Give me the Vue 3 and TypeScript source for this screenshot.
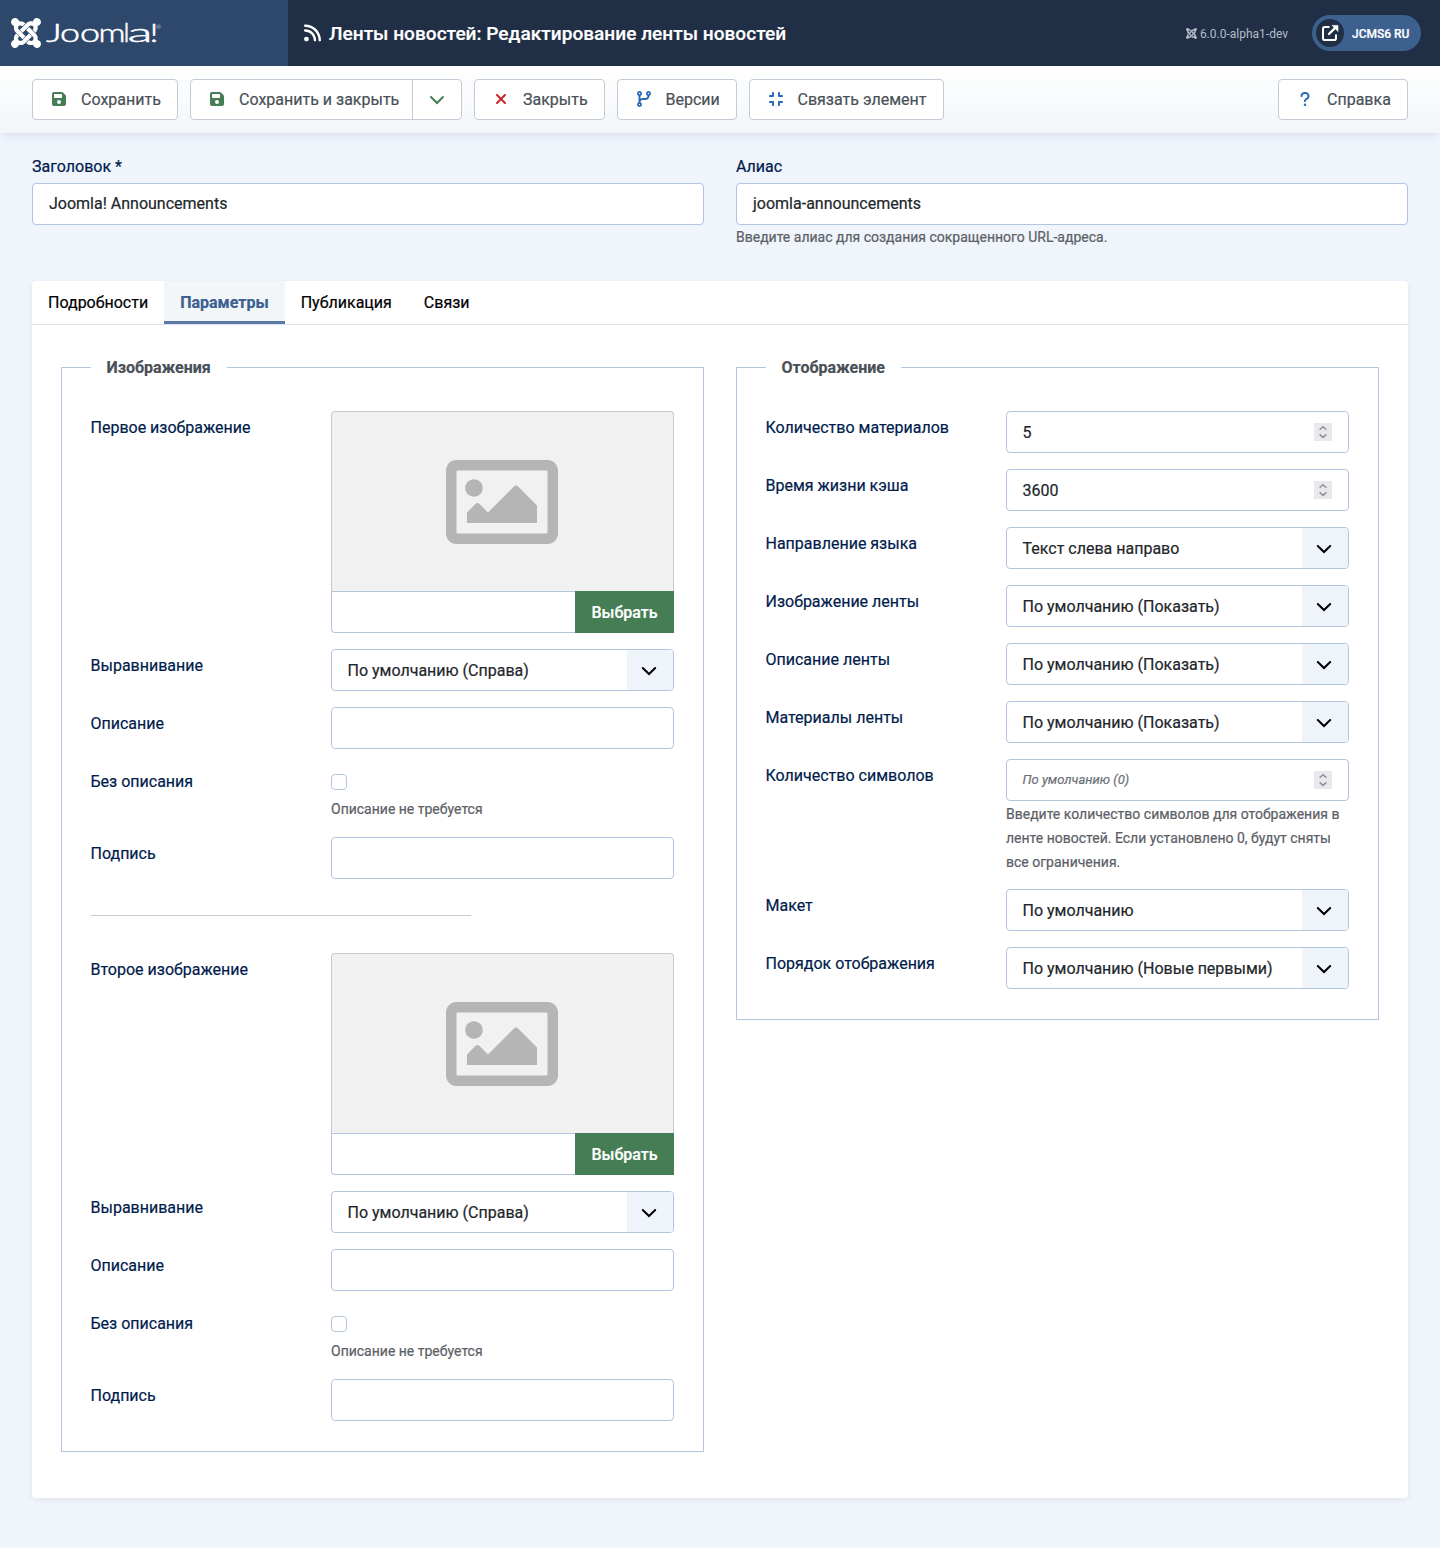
<script setup lang="ts">
interface Field {
  label: string
  type: 'number' | 'select' | 'text' | 'media' | 'check'
  value?: string
  placeholder?: string
  help?: string[]
}

interface ToolButton {
  key: string
  label: string
  icon: string
  box: string
  size: number
  split?: boolean
}

const joomlaMark =
  'M.6 92.1C.6 58.8 27.4 32 60.4 32c30 0 54.5 21.9 59.2 50.2 32.6-7.6 67.1.6 96.5 30l-44.3 44.3c-20.5-20.5-42.6-16.3-55.4-3.5-14.3 14.3-14.3 37.9 0 52.2l99.5 99.5-44 44.3c-87.7-87.2-49.7-49.7-99.8-99.7-26.8-26.5-35-64.8-24.8-98.9C20.4 144.6.6 120.7.6 92.1zm129.5 116.4l44.3 44.3c10-10 89.7-89.7 99.7-99.8 14.3-14.3 37.6-14.3 51.9 0 12.8 12.8 17 35-3.5 55.4l44 44.3c31.2-31.2 38.5-67.6 28.9-101.2 29.2-4.1 51.9-29.2 51.9-59.5 0-33.2-26.8-60.1-59.8-60.1-30.3 0-55.4 22.5-59.5 51.6-33.8-9.9-71.7-1.5-98.3 25.1-18.3 19.1-71.1 71.5-99.6 99.9zm266.3 152.2c8.2-32.7-.9-68.5-26.3-93.9-11.8-12.2 5 4.7-99.5-99.7l-44.3 44.3 99.7 99.7c14.3 14.3 14.3 37.6 0 51.9-12.8 12.8-35 17-55.4-3.5l-44 44.3c27.6 30.2 68 38.8 102.7 28 5.5 27.4 29.7 48.1 58.9 48.1 33 0 59.8-26.8 59.8-60.1 0-30.2-22.5-55-51.6-59.1zm-84.3-53.1l-44-44.3c-87 86.4-50.4 50.4-99.7 99.8-14.3 14.3-37.6 14.3-51.9 0-13.1-13.4-16.9-35.3 3.2-55.4l-44-44.3c-30.2 30.2-38 65.2-29.5 98.3-26.7 6-46.2 29.9-46.2 58.2C0 453.2 26.8 480 59.8 480c28.6 0 52.5-19.8 58.6-46.7 32.7 8.2 68.5-.6 94.2-26 32.1-32 12.2-12.4 99.5-99.7z'
const rss =
  'M0 64C0 46.3 14.3 32 32 32c229.8 0 416 186.2 416 416c0 17.7-14.3 32-32 32s-32-14.3-32-32C384 253.6 226.4 96 32 96C14.3 96 0 81.7 0 64zM0 416a64 64 0 1 1 128 0A64 64 0 1 1 0 416zM32 160c159.1 0 288 128.9 288 288c0 17.7-14.3 32-32 32s-32-14.3-32-32c0-123.7-100.3-224-224-224c-17.7 0-32-14.3-32-32s14.3-32 32-32z'
const floppy =
  'M64 32C28.7 32 0 60.7 0 96V416c0 35.3 28.7 64 64 64H384c35.3 0 64-28.7 64-64V173.3c0-17-6.7-33.3-18.7-45.3L352 50.7C340 38.7 323.7 32 306.7 32H64zm0 96c0-17.7 14.3-32 32-32H288c17.7 0 32 14.3 32 32v64c0 17.7-14.3 32-32 32H96c-17.7 0-32-14.3-32-32V128zM224 288a64 64 0 1 1 0 128 64 64 0 1 1 0-128z'
const xmark =
  'M342.6 150.6c12.5-12.5 12.5-32.8 0-45.3s-32.8-12.5-45.3 0L192 210.7 86.6 105.4c-12.5-12.5-32.8-12.5-45.3 0s-12.5 32.8 0 45.3L146.7 256 41.4 361.4c-12.5 12.5-12.5 32.8 0 45.3s32.8 12.5 45.3 0L192 301.3 297.4 406.6c12.5 12.5 32.8 12.5 45.3 0s12.5-32.8 0-45.3L237.3 256 342.6 150.6z'
const branch =
  'M80 104a24 24 0 1 0 0-48 24 24 0 1 0 0 48zm80-24c0 32.8-19.7 61-48 73.3v87.8c18.8-10.9 40.7-17.1 64-17.1h96c35.3 0 64-28.7 64-64v-6.7C307.7 141 288 112.8 288 80c0-44.2 35.8-80 80-80s80 35.8 80 80c0 32.8-19.7 61-48 73.3V160c0 70.7-57.3 128-128 128H176c-35.3 0-64 28.7-64 64v6.7c28.3 12.3 48 40.5 48 73.3c0 44.2-35.8 80-80 80s-80-35.8-80-80c0-32.8 19.7-61 48-73.3V352 153.3C19.7 141 0 112.8 0 80C0 35.8 35.8 0 80 0s80 35.8 80 80zm232 0a24 24 0 1 0 -48 0 24 24 0 1 0 48 0zM80 456a24 24 0 1 0 0-48 24 24 0 1 0 0 48z'
const compress =
  'M160 64c0-17.7-14.3-32-32-32s-32 14.3-32 32v64H32c-17.7 0-32 14.3-32 32s14.3 32 32 32h96c17.7 0 32-14.3 32-32V64zM32 320c-17.7 0-32 14.3-32 32s14.3 32 32 32H96v64c0 17.7 14.3 32 32 32s32-14.3 32-32V352c0-17.7-14.3-32-32-32H32zM352 64c0-17.7-14.3-32-32-32s-32 14.3-32 32v96c0 17.7 14.3 32 32 32h96c17.7 0 32-14.3 32-32s-14.3-32-32-32H352V64zM320 320c-17.7 0-32 14.3-32 32v96c0 17.7 14.3 32 32 32s32-14.3 32-32V384h64c17.7 0 32-14.3 32-32s-14.3-32-32-32H320z'
const question =
  'M80 160c0-35.3 28.7-64 64-64h32c35.3 0 64 28.7 64 64v3.6c0 21.8-11.1 42.1-29.4 53.8l-42.2 27.1c-25.2 16.2-40.4 44.1-40.4 74V320c0 17.7 14.3 32 32 32s32-14.3 32-32v-1.4c0-8.2 4.2-15.8 11-20.2l42.2-27.1c36.6-23.6 58.8-64.1 58.8-107.7V160c0-70.7-57.3-128-128-128H144C73.3 32 16 89.3 16 160c0 17.7 14.3 32 32 32s32-14.3 32-32zm80 320a40 40 0 1 0 0-80 40 40 0 1 0 0 80z'
const picture =
  'M464 64H48C21.49 64 0 85.49 0 112v288c0 26.51 21.49 48 48 48h416c26.51 0 48-21.49 48-48V112c0-26.51-21.49-48-48-48zm-6 336H54a6 6 0 0 1-6-6V118a6 6 0 0 1 6-6h404a6 6 0 0 1 6 6v276a6 6 0 0 1-6 6zM128 152c-22.091 0-40 17.909-40 40s17.909 40 40 40 40-17.909 40-40-17.909-40-40-40zM96 352h320v-80l-87.515-87.515c-4.686-4.686-12.284-4.686-16.971 0L192 304l-39.515-39.515c-4.686-4.686-12.284-4.686-16.971 0L96 304v48z'

const buttons: ToolButton[] = [
  { key: 'save', label: 'Сохранить', icon: floppy, box: '0 0 448 512', size: 14 },
  { key: 'save-close', label: 'Сохранить и закрыть', icon: floppy, box: '0 0 448 512', size: 14, split: true },
  { key: 'close', label: 'Закрыть', icon: xmark, box: '0 0 384 512', size: 12 },
  { key: 'versions', label: 'Версии', icon: branch, box: '0 0 448 512', size: 14 },
  { key: 'link', label: 'Связать элемент', icon: compress, box: '0 0 448 512', size: 14 },
]

const tabs = ['Подробности', 'Параметры', 'Публикация', 'Связи']
const activeTab = 'Параметры'

const imageFields = (first: string): Field[] => [
  { label: first, type: 'media' },
  { label: 'Выравнивание', type: 'select', value: 'По умолчанию (Справа)' },
  { label: 'Описание', type: 'text' },
  { label: 'Без описания', type: 'check', help: ['Описание не требуется'] },
  { label: 'Подпись', type: 'text' },
]

const groups: { title: string; key: string; blocks: Field[][] }[] = [
  {
    title: 'Изображения',
    key: 'images',
    blocks: [imageFields('Первое изображение'), imageFields('Второе изображение')],
  },
  {
    title: 'Отображение',
    key: 'display',
    blocks: [
      [
        { label: 'Количество материалов', type: 'number', value: '5' },
        { label: 'Время жизни кэша', type: 'number', value: '3600' },
        { label: 'Направление языка', type: 'select', value: 'Текст слева направо' },
        { label: 'Изображение ленты', type: 'select', value: 'По умолчанию (Показать)' },
        { label: 'Описание ленты', type: 'select', value: 'По умолчанию (Показать)' },
        { label: 'Материалы ленты', type: 'select', value: 'По умолчанию (Показать)' },
        {
          label: 'Количество символов',
          type: 'number',
          placeholder: 'По умолчанию (0)',
          help: [
            'Введите количество символов для отображения в',
            'ленте новостей. Если установлено 0, будут сняты',
            'все ограничения.',
          ],
        },
        { label: 'Макет', type: 'select', value: 'По умолчанию' },
        { label: 'Порядок отображения', type: 'select', value: 'По умолчанию (Новые первыми)' },
      ],
    ],
  },
]
</script>

<template>
  <div class="page">
    <header class="header">
      <div class="logo">
        <svg class="logo-mark" viewBox="0 32 448 448"><path :d="joomlaMark" /></svg>
        <svg class="logo-word" width="118" height="30" viewBox="0 0 118 30">
          <text class="word" y="24" font-size="25"><tspan x="0" textLength="16" lengthAdjust="spacingAndGlyphs">J</tspan><tspan x="14" textLength="40" lengthAdjust="spacingAndGlyphs">oo</tspan><tspan x="52.5" textLength="27" lengthAdjust="spacingAndGlyphs">m</tspan><tspan x="77.5" textLength="6" lengthAdjust="spacingAndGlyphs">l</tspan><tspan x="81.5" textLength="25" lengthAdjust="spacingAndGlyphs">a</tspan><tspan x="103.5" textLength="9" lengthAdjust="spacingAndGlyphs">!</tspan></text>
          <text x="110" y="11" font-size="6">®</text>
        </svg>
      </div>
      <h1 class="title">
        <svg width="17" height="20" viewBox="0 0 448 512"><path :d="rss" /></svg>
        <span>Ленты новостей: Редактирование ленты новостей</span>
      </h1>
      <div class="version">
        <svg width="11" height="11" viewBox="0 32 448 448"><path :d="joomlaMark" /></svg>
        <span>6.0.0-alpha1-dev</span>
      </div>
      <a class="site">
        <span class="site-icon">
          <svg width="18" height="18" viewBox="0 0 18 18">
            <path d="M8.5 3H3.8Q2 3 2 4.8V14.2Q2 16 3.8 16H13.2Q15 16 15 14.2V10.5" fill="none" stroke="#fff" stroke-width="2" />
            <path d="M8 10L14 4" fill="none" stroke="#fff" stroke-width="2.4" stroke-linecap="round" />
            <path d="M11 1.4H17V7.4Z" fill="#fff" stroke="#fff" stroke-width=".6" stroke-linejoin="round" />
          </svg>
        </span>
        <span>JCMS6 RU</span>
      </a>
    </header>

    <div class="toolbar">
      <div v-for="b in buttons" :key="b.key" class="btn" :class="b.key">
        <span class="btn-main">
          <span class="btn-icon"><svg :width="b.size" height="16" :viewBox="b.box"><path :d="b.icon" /></svg></span>
          <span>{{ b.label }}</span>
        </span>
        <span v-if="b.split" class="btn-caret">
          <svg width="16" height="10" viewBox="0 0 16 10"><path d="M2 2L8 8L14 2" fill="none" stroke="#457d54" stroke-width="2" stroke-linecap="round" /></svg>
        </span>
      </div>
      <div class="btn help-btn">
        <span class="btn-main">
          <span class="btn-icon"><svg width="10" height="16" viewBox="0 0 320 512"><path :d="question" /></svg></span>
          <span>Справка</span>
        </span>
      </div>
    </div>

    <main class="main">
      <div class="heads">
        <div class="head">
          <label>Заголовок *</label>
          <div class="control">Joomla! Announcements</div>
        </div>
        <div class="head">
          <label>Алиас</label>
          <div class="control">joomla-announcements</div>
          <div class="help"><div>Введите алиас для создания сокращенного URL-адреса.</div></div>
        </div>
      </div>

      <section class="card">
        <nav class="tabs">
          <a v-for="t in tabs" :key="t" class="tab" :class="{ active: t === activeTab }">{{ t }}</a>
        </nav>
        <div class="groups">
          <div v-for="g in groups" :key="g.key" class="group" :class="g.key">
            <div class="legend"><span class="lead"></span><span class="legend-text">{{ g.title }}</span><span class="rest"></span></div>
            <div class="body">
              <template v-for="(block, bi) in g.blocks" :key="bi">
                <hr v-if="bi > 0" />
                <div v-for="f in block" :key="f.label" class="row">
                  <label class="row-label">{{ f.label }}</label>
                  <div class="row-field">
                    <template v-if="f.type === 'media'">
                      <div class="preview"><svg width="112" height="84" viewBox="0 64 512 384"><path :d="picture" /></svg></div>
                      <div class="media-bar"><div class="media-input"></div><div class="media-btn">Выбрать</div></div>
                    </template>
                    <div v-else-if="f.type === 'check'" class="check-wrap"><span class="check"></span></div>
                    <div v-else-if="f.type === 'select'" class="control select">
                      <span class="val">{{ f.value }}</span>
                      <span class="arrow">
                        <svg width="16" height="10" viewBox="0 0 16 10"><path d="M1.8 2L8 8L14.2 2" fill="none" stroke="#000" stroke-width="2" stroke-linecap="round" /></svg>
                      </span>
                    </div>
                    <div v-else class="control">
                      <span v-if="f.placeholder" class="placeholder">{{ f.placeholder }}</span>
                      <span v-else class="val">{{ f.value }}</span>
                      <svg v-if="f.type === 'number'" class="spin" width="18" height="18" viewBox="0 0 18 18">
                        <rect width="18" height="18" fill="#e9e9ed" />
                        <path d="M5.6 6.8L9 3.8L12.4 6.8M5.6 11.4L9 14.4L12.4 11.4" fill="none" stroke="#8f8f9d" stroke-width="1.5" />
                      </svg>
                    </div>
                    <div v-if="f.help" class="help" :class="{ low: f.type === 'number' }"><div v-for="h in f.help" :key="h">{{ h }}</div></div>
                  </div>
                </div>
              </template>
            </div>
          </div>
        </div>
      </section>
    </main>
  </div>
</template>

<style>
body {
  background: #f0f4fb;
}
</style>

<style scoped>
.page,
.page * {
  box-sizing: border-box;
}
.page {
  width: 1440px;
  height: 1548px;
  overflow: hidden;
  background: #f0f4fb;
  font-family: Roboto, 'Noto Sans', sans-serif;
  font-size: 16px;
  line-height: 24px;
  color: #22262a;
  white-space: nowrap;
  -webkit-text-stroke: 0.2px;
}
svg {
  display: block;
  flex: none;
}
.header {
  display: flex;
  align-items: center;
  height: 66px;
  padding-right: 19px;
  background: #202f46;
  color: #fff;
}
.logo {
  display: flex;
  align-items: center;
  width: 288px;
  height: 66px;
  padding-left: 11px;
  background: #2e486b;
}
.logo-mark {
  width: 30px;
  height: 30px;
  fill: #fff;
}
.logo-word {
  margin-left: 5px;
  fill: #fff;
  font-family: Lato, sans-serif;
  font-weight: 300;
}
.word {
  stroke: #fff;
  stroke-width: 0.5px;
}
.title {
  display: flex;
  align-items: center;
  gap: 8px;
  margin: 0 auto 0 16px;
  font-size: 19.1px;
  font-weight: 500;
}
.title svg {
  fill: #fff;
}
.title span {
  padding-top: 1px;
}
.version {
  display: flex;
  align-items: center;
  gap: 3px;
  padding-top: 1px;
  margin-right: 24px;
  font-size: 12px;
  color: #b3bcc9;
  -webkit-text-stroke: 0;
}
.version svg {
  fill: #b3bcc9;
}
.site {
  display: flex;
  align-items: center;
  width: 109px;
  height: 36px;
  padding-left: 4px;
  border-radius: 18px;
  background: #3d618f;
  font-size: 12px;
  font-weight: 500;
}
.site > span:last-child {
  padding-top: 1px;
}
.site-icon {
  display: flex;
  align-items: center;
  justify-content: center;
  width: 28px;
  height: 28px;
  margin-right: 8px;
  border-radius: 50%;
  background: #202f46;
}
.toolbar {
  display: flex;
  gap: 12px;
  height: 67px;
  padding: 13px 32px;
  background: linear-gradient(#fff, #f2f6f9);
  box-shadow: 0 6px 10px -4px rgba(30, 60, 120, 0.13);
}
.btn {
  display: flex;
  height: 41px;
  border: 1px solid #c4cad6;
  border-radius: 4px;
  background: #fff;
  color: #495057;
}
.btn-main {
  display: flex;
  align-items: center;
  padding-left: 16px;
}
.btn-icon {
  display: flex;
  justify-content: center;
  width: 20px;
  margin-right: 12px;
  padding-bottom: 1px;
}
.save {
  width: 146px;
}
.save-close {
  width: 272px;
}
.save-close .btn-main {
  width: 221px;
}
.close {
  width: 131px;
}
.versions {
  width: 120px;
}
.link {
  width: 195px;
}
.versions .btn-main,
.link .btn-main {
  padding-left: 15.5px;
}
.help-btn {
  width: 130px;
  margin-left: auto;
}
.save svg,
.save-close svg {
  fill: #457d54;
}
.close svg {
  fill: #c52827;
}
.versions svg,
.link svg,
.help-btn svg {
  fill: #2a69b8;
}
.btn-caret {
  display: flex;
  flex: 1;
  align-items: center;
  justify-content: center;
  border-left: 1px solid #c4cad6;
}
.main {
  padding: 21px 32px 0;
}
.heads {
  display: grid;
  grid-template-columns: 672px 672px;
  gap: 32px;
  height: 127px;
}
.head label {
  display: block;
  height: 29px;
  padding-top: 1px;
  color: #001b4c;
}
.control {
  display: flex;
  align-items: center;
  justify-content: space-between;
  height: 42px;
  padding: 0 16px;
  border: 1px solid #b4c6df;
  border-radius: 4px;
  background: #fff;
}
.row .control {
  padding-left: 15.5px;
}
.val {
  padding-top: 2px;
}
.help {
  font-size: 14px;
  color: #5b6066;
}
.help.low {
  height: 72px;
  padding-top: 1px;
}
.card {
  height: 1217px;
  border-radius: 4px;
  background: #fff;
  box-shadow: 0 2px 6px rgba(30, 60, 120, 0.07);
}
.tabs {
  display: flex;
  height: 44px;
  border-bottom: 1px solid #dbe3ef;
  color: #000;
}
.tab {
  height: 43px;
  padding: 10px 16px 0;
}
.tab.active {
  border-bottom: 3px solid #5a7aa5;
  background: #f2f6f9;
  font-weight: 700;
  color: #3a5f90;
}
.groups {
  display: flex;
  align-items: flex-start;
  gap: 32px;
  padding: 30px 29px 0;
}
.group {
  width: 643px;
}
.legend {
  display: flex;
  align-items: flex-end;
  height: 24px;
  margin-bottom: -12px;
}
.lead {
  width: 30px;
  height: 12px;
  border-top: 1px solid #b4c6df;
}
.rest {
  flex: 1;
  height: 12px;
  border-top: 1px solid #b4c6df;
}
.legend-text {
  width: 135px;
  height: 24px;
  padding: 1px 0 0 15.5px;
  font-weight: 700;
  color: #495057;
}
.images .legend-text {
  width: 136px;
}
.body {
  padding: 44px 29px 14px;
  border: 1px solid #b4c6df;
  border-top: 0;
}
.row {
  display: flex;
  margin-bottom: 16px;
}
.row-label {
  width: 240.5px;
  margin-left: -0.5px;
  padding-top: 5px;
  color: #001b4c;
}
.row-field {
  width: 343px;
}
hr {
  width: 380px;
  height: 1px;
  margin: 36px 0 37px;
  border: 0;
  background: #c8ccd0;
}
.preview {
  display: flex;
  align-items: center;
  justify-content: center;
  height: 180px;
  padding: 0 1px 0 0;
  border: 1px solid #c9cacc;
  border-bottom: 0;
  border-radius: 4px 4px 0 0;
  background: #f1f1f1;
}
.preview svg {
  fill: #b5b5b5;
}
.media-bar {
  display: flex;
  height: 42px;
}
.media-input {
  flex: 1;
  border: 1px solid #b4c6df;
  border-right: 0;
  border-radius: 0 0 0 4px;
}
.media-btn {
  width: 99px;
  padding-left: 16.5px;
  background: #457d54;
  font-weight: 500;
  line-height: 44px;
  color: #fff;
}
.check-wrap {
  height: 32px;
  padding-top: 9px;
}
.check {
  display: block;
  width: 16px;
  height: 16px;
  border: 1px solid #b4c6df;
  border-radius: 4px;
}
.row .select {
  padding-right: 0;
}
.arrow {
  display: flex;
  align-items: center;
  justify-content: center;
  width: 46px;
  height: 40px;
  padding: 1px 2px 0 0;
  border-radius: 0 3px 3px 0;
  background: #eff4fb;
}
.placeholder {
  font-size: 13px;
  font-style: italic;
  color: #6a7077;
}
</style>
